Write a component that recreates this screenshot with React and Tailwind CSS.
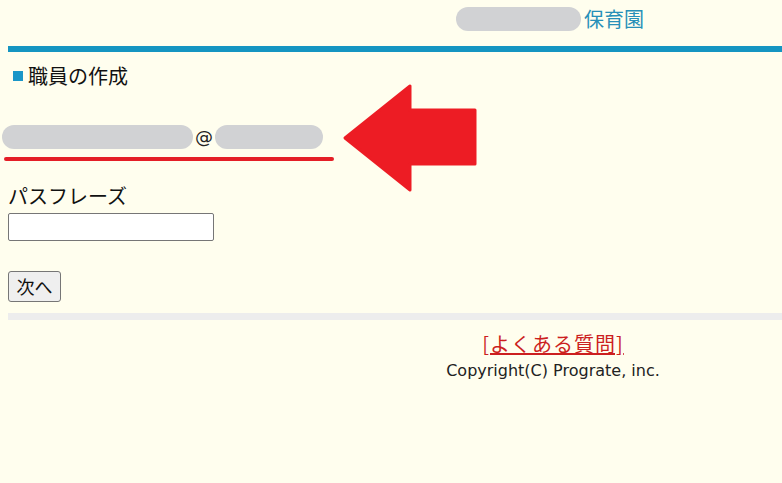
import React from "react";

const jp = { fontFamily: '"Noto Sans CJK JP", "Noto Sans", sans-serif' };
const latin = { fontFamily: '"DejaVu Sans", Verdana, sans-serif' };

function Arrow() {
  return (
    <svg width="140" height="112" viewBox="0 0 140 112" className="absolute left-[338px] top-[-42px]">
      <polygon
        points="5,55 70,3 70,27 135,27 135,81 70,81 70,107"
        fill="#ed1c24"
        stroke="#ed1c24"
        strokeWidth="3"
        strokeLinejoin="round"
      />
    </svg>
  );
}

export default function App() {
  return (
    <div className="h-[483px] w-full overflow-hidden bg-[#fffeee]" style={jp}>
      <div className="ml-2 w-[1090px]">
        {/* header */}
        <div className="flex h-[46px] items-start pl-[448px] pt-[7px]">
          <div className="h-[24px] w-[125px] rounded-full bg-[#d1d2d4]" />
          <span className="ml-[3px] text-[20px] leading-[24px] text-[#2790b8]">保育園</span>
        </div>
        <div className="h-[6px] bg-[#1595c1]" />

        {/* title */}
        <div className="mt-[10px] flex h-[28px] items-center text-[20px] text-[#111]">
          <div className="ml-[5px] mr-[5px] h-[10px] w-[10px] bg-[#1a96c8]" />
          <span>職員の作成</span>
        </div>

        {/* email */}
        <div className="relative -ml-[6px] mt-[35px] flex h-[24px] items-center">
          <div className="h-[24px] w-[191px] rounded-full bg-[#d1d2d4]" />
          <span className="mx-[2px] text-[18px] leading-[24px] text-[#222]" style={latin}>@</span>
          <div className="h-[24px] w-[108px] rounded-full bg-[#d1d2d4]" />
          <Arrow />
        </div>
        <div className="-ml-[4px] mt-[8px] h-[4px] w-[330px] rounded-full bg-[#e41e26]" />

        {/* passphrase */}
        <div className="mt-[21px] text-[20px] leading-[28px] text-[#111]">パスフレーズ</div>
        <input
          type="password"
          className="mt-[3px] block h-[28px] w-[206px] rounded-[2px] border border-[#767676] bg-white"
        />
        <button className="mt-[30px] block h-[31px] w-[53px] rounded-[3px] border border-[#767676] bg-[#efefef] text-[18px] text-[#111]">
          次へ
        </button>

        <div className="mt-[11px] h-[7px] bg-[#ededed]" />

        {/* footer */}
        <div className="mt-[10px] flex flex-col items-center">
          <a href="#" className="text-[20px] leading-[28px] tracking-[1px] text-[#cc1f1f] underline">
            [よくある質問]
          </a>
          <div className="mt-[3px] text-[16px] leading-[20px] text-[#222]" style={latin}>
            Copyright(C) Prograte, inc.
          </div>
        </div>
      </div>
    </div>
  );
}
